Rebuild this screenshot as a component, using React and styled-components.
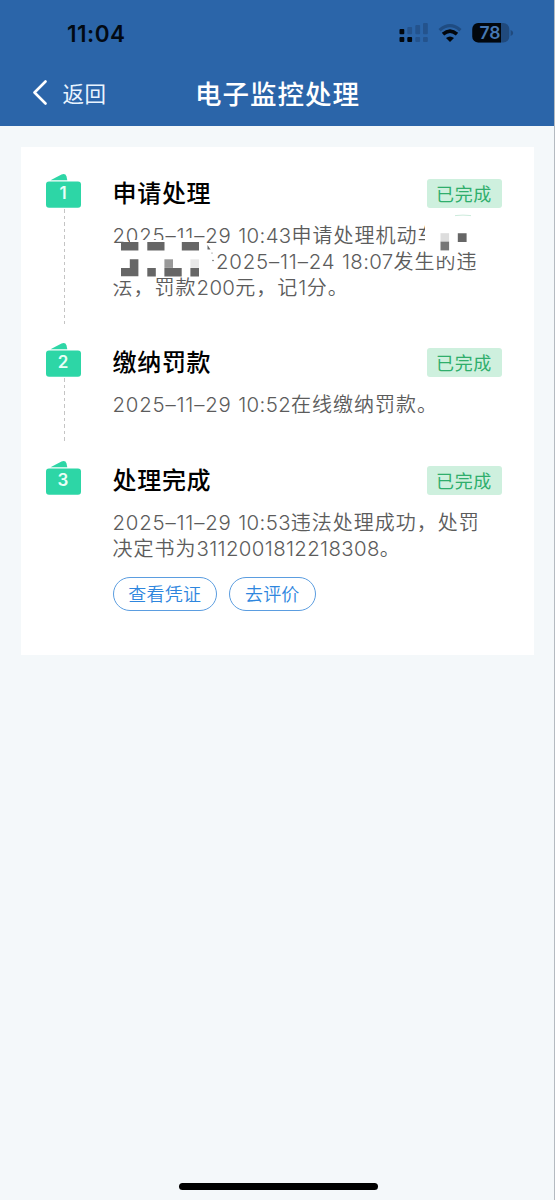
import React from 'react';
import styled, { createGlobalStyle } from 'styled-components';

const Global = createGlobalStyle`
  * { box-sizing: border-box; }
  body {
    margin: 0;
    background: #f4f8fa;
    font-family: Inter, "Noto Sans CJK SC", sans-serif;
  }
`;

const Page = styled.div`
  width: 555px;
  height: 1200px;
  display: flex;
  flex-direction: column;
  background: #f4f8fa;
  border-right: 1px solid #b4bac0;
  overflow: hidden;
`;

const Header = styled.header`
  height: 126px;
  margin-right: -1px;
  background: #2b65a9;
  flex: none;
`;

const StatusBar = styled.div`
  height: 66px;
  display: flex;
  justify-content: space-between;
  align-items: center;
  padding: 0 41px 0 67px;
`;

const Clock = styled.span`
  font-size: 22.5px;
  font-weight: 600;
  color: #020a14;
  letter-spacing: 0.5px;
`;

const NavBar = styled.nav`
  height: 60px;
  display: grid;
  grid-template-columns: 195px 1fr;
  align-items: start;
  color: #fff;
`;

const Back = styled.div`
  display: flex;
  align-items: center;
  height: 54px;
  padding-left: 32px;
  font-size: 21.5px;
  line-height: 56px;
  color: #e9f4ff;
`;

const BackLabel = styled.span`
  margin-left: 14.5px;
  padding-top: 2px;
  letter-spacing: 0.4px;
`;

const Title = styled.h1`
  margin: 0;
  font-size: 26.5px;
  line-height: 56px;
  font-weight: 500;
  letter-spacing: 1px;
`;

const Card = styled.main`
  width: 513px;
  height: 508px;
  margin: 21px 0 0 21px;
  padding: 26px 32px 0 25px;
  background: #fff;
`;

const Step = styled.section`
  display: grid;
  grid-template-columns: 66.5px 1fr;
  height: ${(p) => p.$height}px;
`;

const Rail = styled.div`
  display: flex;
  flex-direction: column;
  width: 37px;
`;

const Marker = styled.div`
  position: relative;
  height: 36px;
  svg { display: block; }
`;

const Number = styled.span`
  position: absolute;
  left: 0;
  top: 9px;
  width: 34px;
  text-align: center;
  font-size: 17px;
  line-height: 22px;
  font-weight: 600;
  color: #e9fff7;
`;

const Dashes = styled.div`
  width: 1.5px;
  height: ${(p) => p.$height}px;
  margin-left: 17.5px;
  background: repeating-linear-gradient(#c4c4c4 0 3.6px, transparent 3.6px 6.6px);
`;

const Content = styled.div`
  position: relative;
`;

const StepHead = styled.div`
  display: flex;
  justify-content: space-between;
  align-items: center;
  height: 41px;
`;

const StepTitle = styled.h2`
  margin: 0;
  font-size: 24px;
  line-height: 41px;
  font-weight: 500;
  letter-spacing: 0.7px;
  color: #000;
`;

const Badge = styled.span`
  width: 75px;
  height: 29px;
  padding-right: 1px;
  border-radius: 3px;
  background: #cef0de;
  color: #2fae6c;
  font-size: 18px;
  line-height: 31px;
  letter-spacing: 0.7px;
  text-align: center;
`;

const Lines = styled.div`
  padding-top: 9px;
  color: #5c5c5c;
  font-size: 20px;
  font-weight: 350;
`;

const Line = styled.div`
  height: 26px;
  line-height: 26px;
  padding-left: ${(p) => p.$indent || 0}px;
  white-space: pre;
  letter-spacing: 1px;
`;

const Digits = styled.span`
  font-size: 20.4px;
  font-weight: 300;
  letter-spacing: 0.36px;
`;

const DateDigits = styled(Digits)`
  letter-spacing: 0.82px;
`;

const Mask = styled.svg`
  position: absolute;
  left: -2.5px;
  top: 38px;
`;

const Actions = styled.div`
  display: flex;
  gap: 12px;
  margin-top: 15px;
`;

const Action = styled.button`
  width: ${(p) => p.$width}px;
  height: 34px;
  padding: 2px 0 0;
  border: 1.3px solid #5b9de0;
  border-radius: 17px;
  background: #fff;
  color: #2e86de;
  font: 350 18px/30px Inter, "Noto Sans CJK SC", sans-serif;
  letter-spacing: 0.2px;
`;

const HomeBar = styled.div`
  width: 199px;
  height: 7px;
  margin: auto 0 10px 178.5px;
  border-radius: 4px;
  background: #000;
`;

const StatusIcons = () => (
  <svg width="115" height="24" viewBox="399 21 115 24">
    <g fill="#02070d">
      <rect x="399.5" y="29" width="4.8" height="5.3" rx="1" />
      <rect x="399.5" y="37" width="4.8" height="5" rx="1" />
      <rect x="407.3" y="37" width="4.8" height="5" rx="1" />
    </g>
    <g fill="#24538d">
      <rect x="407.3" y="27" width="4.8" height="7.3" rx="1" />
      <rect x="415.3" y="25" width="4.8" height="9.3" rx="1" />
      <rect x="423" y="23" width="4.8" height="11.3" rx="1" />
      <rect x="415.3" y="37" width="4.8" height="5" rx="1" />
      <rect x="423" y="37" width="4.8" height="5" rx="1" />
    </g>
    <path d="M439.6 30.2q10.4-9.2 20.8 0" fill="none" stroke="#1f4c82" strokeWidth="3.2" />
    <path d="M443 34.2q7-6.2 14 0" fill="none" stroke="#02070d" strokeWidth="3.6" />
    <path d="M446 38q4-3.2 8 0L450 42Z" fill="#02070d" />
    <rect x="472.3" y="23" width="37" height="19.5" rx="6" fill="#204a7d" />
    <path d="M478.3 23H501v19.5h-22.7a6 6 0 0 1-6-6V29a6 6 0 0 1 6-6Z" fill="#02070d" />
    <path d="M510.6 30q2.6 1 2.6 3t-2.6 3Z" fill="#204a7d" />
    <text x="479.5" y="39.2" fontSize="17.5" fontWeight="600" textLength="21" fill="#4678b3">78</text>
  </svg>
);

const BackIcon = () => (
  <svg width="16" height="26" viewBox="0 0 16 26" fill="none" stroke="#fff" strokeWidth="2.6" strokeLinecap="round" strokeLinejoin="round">
    <path d="M13.5 1.5 2.5 12.500l11 11" />
  </svg>
);

const Folder = () => (
  <svg width="36" height="36" viewBox="0 0 36 36" fill="#2dd6a6">
    <path d="M4.5 7.2 15.5 1.5Q19.5 0 20.5 3.5l.8 3.7Z" />
    <rect x="0" y="8.5" width="35" height="26.3" rx="3" />
  </svg>
);

const MosaicMask = () => (
  <Mask width="380" height="80" viewBox="110 211 380 80">
    <path fill="#fff" d="M121 242H130V240H172V238H199V243H213V276H146V281H112V251H121ZM425 218H474V252H456V256H436V252H425Z" />
    <g fill="#666">
      <path d="M121 242h17.4v8.6H121ZM147.3 242h17.2v8.6h-17.2ZM181.8 242h17.2v8.6h-17.2Z" />
      <path d="M129.8 259.3h8.6v17H121v-8.4h8.8ZM147.3 268h8.5v8.4h-8.5ZM164.4 268h17.3v8.4h-17.3ZM190.4 268h8.6v8.4h-8.6Z" />
      <path d="M457.8 233.2h8.8v8.8h-8.8ZM207.5 245l3 4.5h-3Z" />
      <circle cx="213" cy="260.5" r=".8" />
      <circle cx="212" cy="253" r=".6" />
    </g>
    <path fill="#999" d="M164.4 259.3h8.6v8.6h-8.6Z" />
    <path fill="#e8e8e8" d="M190.4 259.3h8.6v8.6h-8.6Z" />
    <path fill="#ddd" d="M440.5 233.2h8.6v8.4h-8.6Z" />
    <path fill="#777" d="M440.5 241.6h8.6v8.8h-8.6Z" />
    <path d="M455 215.6q8-1 16 0" stroke="#cdebdc" fill="none" />
  </Mask>
);

const StepMarker = ({ n, dash }) => (
  <Rail>
    <Marker><Folder /><Number>{n}</Number></Marker>
    {dash && <Dashes $height={dash} />}
  </Rail>
);

const Head = ({ children }) => (
  <StepHead><StepTitle>{children}</StepTitle><Badge>已完成</Badge></StepHead>
);

const Stamp = ({ date, time }) => (
  <><DateDigits>{date} </DateDigits><Digits>{time}</Digits></>
);

export default function App() {
  return (
    <Page>
      <Global />
      <Header>
        <StatusBar><Clock>11:04</Clock><StatusIcons /></StatusBar>
        <NavBar>
          <Back><BackIcon /><BackLabel>返回</BackLabel></Back>
          <Title>电子监控处理</Title>
        </NavBar>
      </Header>
      <Card>
        <Step $height={169}>
          <StepMarker n="1" dash={115} />
          <Content>
            <Head>申请处理</Head>
            <Lines>
              <Line><Stamp date="2025–11–29" time="10:43" />申请处理机动车</Line>
              <Line $indent={103.5}><Stamp date="2025–11–24" time="18:07" />发生的违</Line>
              <Line>法，罚款<Digits>200</Digits>元，记<Digits>1</Digits>分。</Line>
            </Lines>
            <MosaicMask />
          </Content>
        </Step>
        <Step $height={117.5}>
          <StepMarker n="2" dash={65} />
          <Content>
            <Head>缴纳罚款</Head>
            <Lines>
              <Line><Stamp date="2025–11–29" time="10:52" />在线缴纳罚款。</Line>
            </Lines>
          </Content>
        </Step>
        <Step $height={169.5}>
          <StepMarker n="3" />
          <Content>
            <Head>处理完成</Head>
            <Lines>
              <Line><Stamp date="2025–11–29" time="10:53" />违法处理成功，处罚</Line>
              <Line>决定书为<Digits>3112001812218308</Digits>。</Line>
            </Lines>
            <Actions>
              <Action $width={104.5}>查看凭证</Action>
              <Action $width={86.5}>去评价</Action>
            </Actions>
          </Content>
        </Step>
      </Card>
      <HomeBar />
    </Page>
  );
}
